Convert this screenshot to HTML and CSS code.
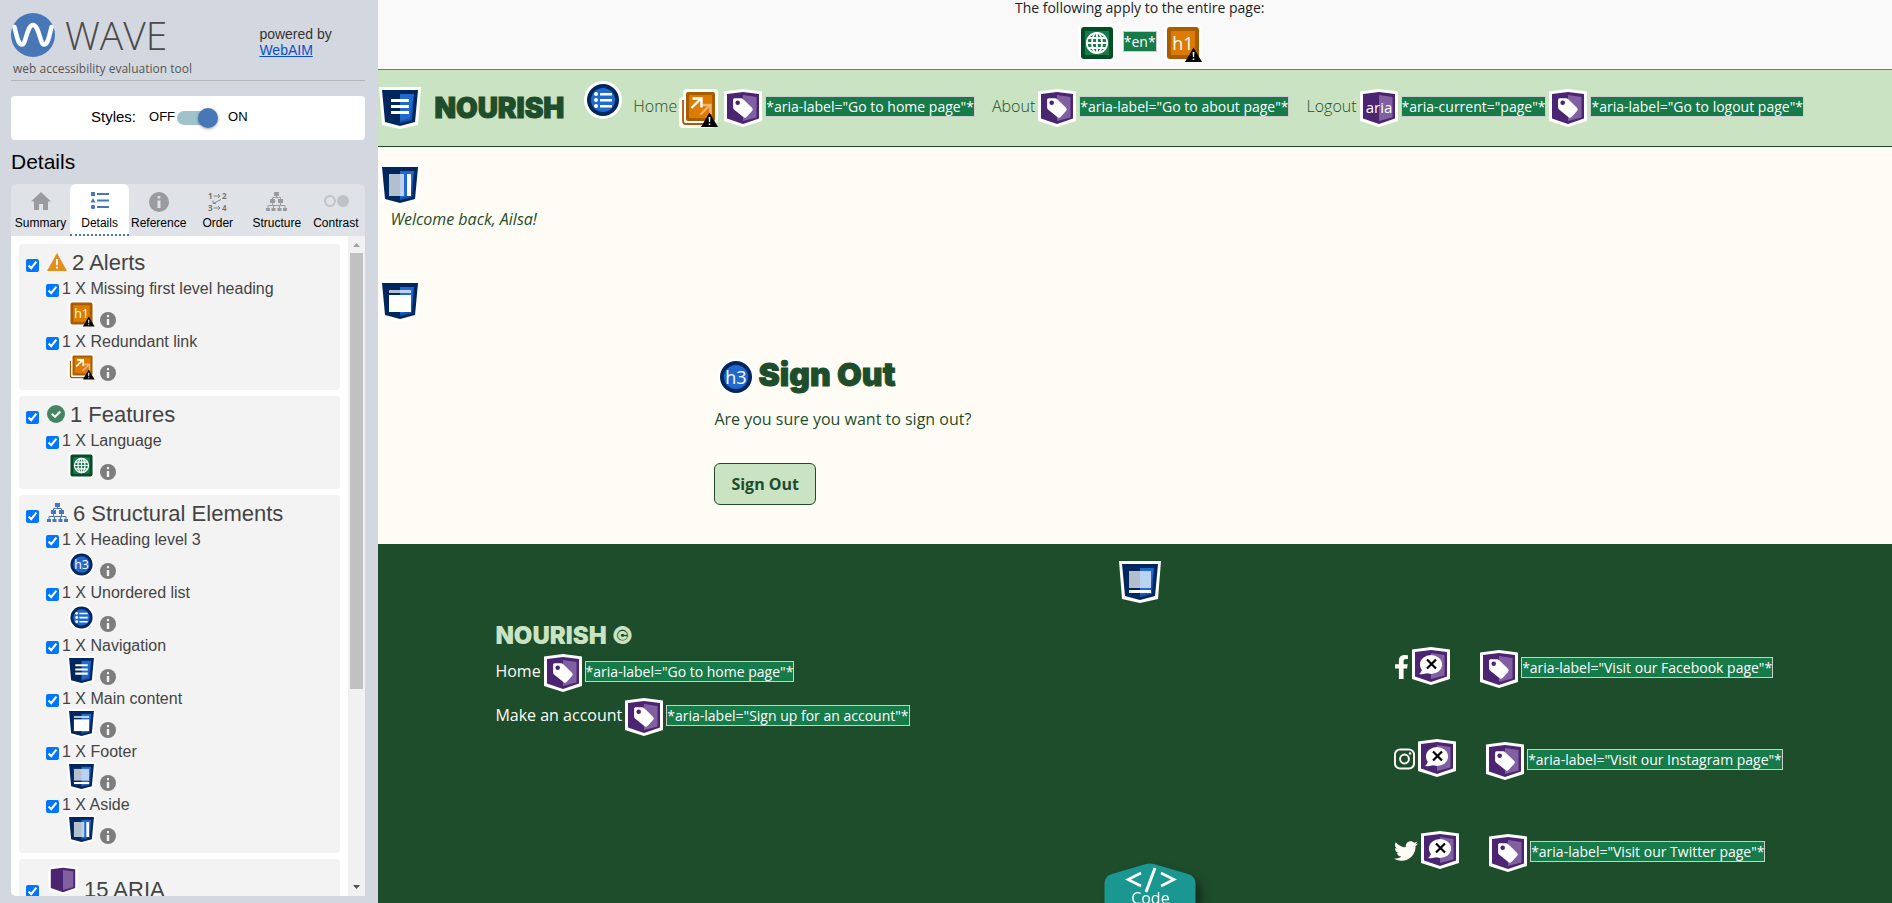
FILE: index.html
```html
<!DOCTYPE html>
<html lang="en">
<head>
<meta charset="utf-8">
<title>Nourish - WAVE report</title>
<link rel="stylesheet" href="styles.css">
</head>
<body>
<svg class="sprite" aria-hidden="true">
  <symbol id="landmark" viewBox="0 0 42 42">
    <path fill="#fff" d="M0 0h42l-3 38-18 4-18-4z"/>
    <path fill="#00265e" d="M3 3h36l-3 32-15 4-15-4z"/>
    <path fill="#1f69cf" d="M21 7h14l-2 26-12 3z"/>
    <path fill="#00265e" opacity=".35" d="M35 7l-2 26-12 3v-2l10-3z"/>
  </symbol>
  <symbol id="nav" viewBox="0 0 42 42">
    <use href="#landmark"/>
    <path fill="#fff" d="M12 12h18v3H12zM12 18h18v3H12zM12 24h18v3H12z"/>
  </symbol>
  <symbol id="aside" viewBox="0 0 42 42">
    <use href="#landmark"/>
    <path fill="#fff" opacity=".7" d="M10 10h15v22H10z"/><path fill="#fff" d="M28 10h4v22h-4z"/>
  </symbol>
  <symbol id="maincontent" viewBox="0 0 42 42">
    <use href="#landmark"/>
    <path fill="#fff" opacity=".7" d="M10 10h22v3H10z"/><path fill="#fff" d="M10 15h22v17H10z"/>
  </symbol>
  <symbol id="foot" viewBox="0 0 42 42">
    <use href="#landmark"/>
    <path fill="#fff" opacity=".7" d="M10 10h22v17H10z"/><path fill="#fff" d="M10 29h22v3H10z"/>
  </symbol>
  <symbol id="disc" viewBox="0 0 42 42">
    <circle cx="21" cy="21" r="19" fill="#fff"/><circle cx="21" cy="21" r="16" fill="#00265e"/><circle cx="21" cy="21" r="12" fill="#1f69cf"/>
  </symbol>
  <symbol id="list" viewBox="0 0 42 42">
    <use href="#disc"/>
    <g fill="#fff"><circle cx="14" cy="15" r="2"/><circle cx="14" cy="21" r="2"/><circle cx="14" cy="27" r="2"/>
    <path d="M18 14h12v2.400H18zM18 20h12v2.400H18zM18 26h12v2.400H18z"/></g>
  </symbol>
  <symbol id="h3" viewBox="0 0 42 42">
    <use href="#disc"/><text class="glyph" x="21" y="28" text-anchor="middle">h3</text>
  </symbol>
  <symbol id="warn" viewBox="0 0 42 42">
    <path d="M31.500 25.500L40 40H23z"/><path fill="#fff" d="M30.600 30h1.800l-.3 5h-1.200zM30.700 36.500h1.600V38h-1.600z"/>
  </symbol>
  <symbol id="h1" viewBox="0 0 42 42">
    <rect x="2" y="2" width="38" height="38" rx="5" fill="#fff"/><rect x="5" y="5" width="32" height="32" rx="3" fill="#aa5d00"/><path fill="#dd7a00" d="M9 9h24v24H9z"/>
    <text class="glyph" x="21" y="28" text-anchor="middle">h1</text><use href="#warn"/>
  </symbol>
  <symbol id="redundant" viewBox="0 0 42 42">
    <rect x="1" y="10" width="36" height="31" rx="4" fill="#fff"/><rect x="5" y="2" width="35" height="35" rx="4" fill="#fff"/>
    <path fill="none" stroke="#aa5d00" stroke-width="1.800" d="M5 13v21q0 3 3 3h24"/>
    <rect x="8" y="5" width="29" height="29" rx="2" fill="#aa5d00"/><path fill="#dd7a00" d="M11 8h23v23H11z"/>
    <path fill="none" stroke="#fff" stroke-width="2.400" d="M13.500 21L23 11.500M14.500 11.500h9v9"/>
    <path fill="none" stroke="#fff" stroke-width="2.400" opacity=".45" d="M22.500 27.500l9-9M24 18h8.500v9"/>
    <use href="#warn"/>
  </symbol>
  <symbol id="globe" viewBox="0 0 42 42">
    <rect x="2" y="2" width="38" height="38" rx="5" fill="#fff"/><rect x="5" y="5" width="32" height="32" rx="3" fill="#004d26"/><path fill="#177a49" d="M9 9h24v24H9z"/>
    <g fill="none" stroke="#fff" stroke-width="1.800"><circle cx="21" cy="21" r="10.200"/><ellipse cx="21" cy="21" rx="5" ry="10.200"/><path d="M21 11v20M11 21h20M12.500 16h17M12.500 26h17"/></g>
  </symbol>
  <symbol id="hex" viewBox="0 0 42 42">
    <path fill="#fff" d="M2 4.500L21 2l19 2.500V34l-19 6-19-6z"/>
    <path fill="#4b2472" d="M5 7l16-2 16 2v24.500L21 37 5 31.500z"/>
    <path fill="#8060a0" d="M21 8l13.500 2v20.500L21 34z"/>
  </symbol>
  <symbol id="tag" viewBox="0 0 42 42">
    <use href="#hex"/>
    <path fill="#fff" d="M12.500 11.300H19q1.300 0 2.200.9l8.800 8.600q1.700 1.600 0 3.300l-5.400 6q-1.600 1.600-3.300 0L12 22.500q-.9-.9-.9-2v-7.700q0-1.500 1.400-1.500z"/>
    <circle cx="15.700" cy="15.700" r="2.300" fill="#4b2472"/>
  </symbol>
  <symbol id="alt" viewBox="0 0 42 42">
    <use href="#hex"/>
    <ellipse cx="21" cy="19.500" rx="11" ry="9.500" fill="#fff"/><path fill="#fff" d="M12 23q0 4-3 6 5 .5 9-1z"/>
    <path stroke="#000" stroke-width="2.200" d="M17 14.500l9 9M26 14.500l-9 9"/>
  </symbol>
  <symbol id="aria" viewBox="0 0 42 42">
    <use href="#hex"/><text class="glyph glyph-aria" x="21" y="26" text-anchor="middle">aria</text>
  </symbol>
  <symbol id="info" viewBox="0 0 16 16">
    <circle cx="8" cy="8" r="8"/><path fill="#f3f3f3" d="M7 3h2v2.300H7zM6.800 7h2.400v6H6.800z"/>
  </symbol>
  <symbol id="tree" viewBox="0 0 21 19">
    <path d="M8 0h5v4H8zM4 7h5v4H4zM12 7h5v4h-5zM0 16h4v3H0zM5.500 16h4v3h-4zM11.500 16h4v3h-4zM17 16h4v3h-4z"/>
    <path fill="none" stroke="currentColor" d="M10.500 4v1.500M6.500 8V5.500h8V8M6.500 11v2.500M14.500 11v2.500M2 16v-2.500h17V16M7.500 13.500V16M13.500 13.500V16"/>
  </symbol>
</svg>

<div class="app">
  <aside class="sidebar">
    <header class="brand">
      <div>
        <div class="wordmark">
          <svg width="44" height="44" viewBox="0 0 44 44" aria-hidden="true">
            <circle cx="22" cy="22" r="22" fill="#4877b8"/>
            <path fill="none" stroke="#fff" stroke-width="4.500" stroke-linecap="round" d="M3.500 14C6 24 7 31.500 11 31.500S16 12 22 12s7 19.500 11 19.500S38 24 40.500 14"/>
          </svg>
          <span>WAVE</span>
        </div>
        <p class="tagline">web accessibility evaluation tool</p>
      </div>
      <p class="powered">powered by<br><a href="#">WebAIM</a></p>
    </header>

    <div class="styles-box">
      <span class="styles-label" id="styles-label">Styles:</span>
      <label class="toggle"><span>OFF</span><input type="checkbox" role="switch" aria-labelledby="styles-label" checked><span>ON</span></label>
    </div>

    <h2 class="side-title">Details</h2>

    <div class="tabs">
      <button class="tab"><svg width="20" height="18" viewBox="0 0 20 18"><path d="M10 0l10 9.500h-3V18h-5v-6H8v6H3V9.500H0z"/></svg>Summary</button>
      <button class="tab active"><svg width="20" height="18" viewBox="0 0 20 18"><path d="M1 0h4v4H1zM7 1h12v2H7zM3 6l2.500 4.500h-5zM7 7.500h12v2H7zM7 14h12v2H7z"/><circle cx="3" cy="15" r="2.200"/></svg>Details</button>
      <button class="tab"><svg width="20" height="20" viewBox="0 0 20 20"><circle cx="10" cy="10" r="10"/><path fill="#dfe2e7" d="M8.700 4h2.600v2.600H8.700zM8.500 8.500h3V16h-3z"/></svg>Reference</button>
      <button class="tab"><svg class="order" width="20" height="20" viewBox="0 0 20 20"><text x="0" y="7">1</text><text x="14" y="7">2</text><text x="0" y="19">3</text><text x="14" y="19">4</text><path d="M5.500 4H12M10 2l2 2-2 2M5.500 16H12M10 14l2 2-2 2M13 7.500l-8 4M5 8.500v3h3"/></svg>Order</button>
      <button class="tab"><svg width="21" height="19"><use href="#tree"/></svg>Structure</button>
      <button class="tab"><svg width="26" height="18" viewBox="0 0 26 18"><circle cx="7" cy="9" r="5" fill="none" stroke="#bfc2c6" stroke-width="2"/><circle cx="20" cy="9" r="6" fill="#bfc2c6"/></svg>Contrast</button>
    </div>

    <div class="panel">
      <div class="cards">
        <section class="card">
          <h3 class="group"><input type="checkbox" aria-label="Alerts" checked><svg width="20" height="18" viewBox="0 0 20 18"><path fill="#e48f1b" d="M10 0l10 18H0z"/><path fill="#f3f3f3" d="M9 6h2v6H9zM9 13.500h2v2H9z"/></svg>2 Alerts</h3>
          <div class="item"><label><input type="checkbox" checked>1 X Missing first level heading</label><div class="item-icons"><svg class="small"><use href="#h1"/></svg><svg class="info"><use href="#info"/></svg></div></div>
          <div class="item"><label><input type="checkbox" checked>1 X Redundant link</label><div class="item-icons"><svg class="small"><use href="#redundant"/></svg><svg class="info"><use href="#info"/></svg></div></div>
        </section>
        <section class="card">
          <h3 class="group"><input type="checkbox" aria-label="Features" checked><svg width="18" height="18" viewBox="0 0 18 18"><circle cx="9" cy="9" r="9" fill="#458563"/><path fill="none" stroke="#f3f3f3" stroke-width="2.200" d="M4.800 8.800l3.200 3 5.300-5.300"/></svg>1 Features</h3>
          <div class="item"><label><input type="checkbox" checked>1 X Language</label><div class="item-icons"><svg class="small"><use href="#globe"/></svg><svg class="info"><use href="#info"/></svg></div></div>
        </section>
        <section class="card">
          <h3 class="group"><input type="checkbox" aria-label="Structural Elements" checked><svg class="blue" width="21" height="19"><use href="#tree"/></svg>6 Structural Elements</h3>
          <div class="item"><label><input type="checkbox" checked>1 X Heading level 3</label><div class="item-icons"><svg class="small"><use href="#h3"/></svg><svg class="info"><use href="#info"/></svg></div></div>
          <div class="item"><label><input type="checkbox" checked>1 X Unordered list</label><div class="item-icons"><svg class="small"><use href="#list"/></svg><svg class="info"><use href="#info"/></svg></div></div>
          <div class="item"><label><input type="checkbox" checked>1 X Navigation</label><div class="item-icons"><svg class="small"><use href="#nav"/></svg><svg class="info"><use href="#info"/></svg></div></div>
          <div class="item"><label><input type="checkbox" checked>1 X Main content</label><div class="item-icons"><svg class="small"><use href="#maincontent"/></svg><svg class="info"><use href="#info"/></svg></div></div>
          <div class="item"><label><input type="checkbox" checked>1 X Footer</label><div class="item-icons"><svg class="small"><use href="#foot"/></svg><svg class="info"><use href="#info"/></svg></div></div>
          <div class="item"><label><input type="checkbox" checked>1 X Aside</label><div class="item-icons"><svg class="small"><use href="#aside"/></svg><svg class="info"><use href="#info"/></svg></div></div>
        </section>
        <section class="card">
          <h3 class="group tall"><input type="checkbox" aria-label="ARIA" checked><svg width="32" height="32"><use href="#hex"/></svg>15 ARIA</h3>
        </section>
      </div>
      <div class="scroll" aria-hidden="true">
        <svg width="17" height="17" viewBox="0 0 17 17"><path fill="#a3a3a3" d="M5 11l3.500-4 3.500 4z"/></svg>
        <div class="thumb"></div>
        <svg width="17" height="17" viewBox="0 0 17 17"><path fill="#505050" d="M5 6h7l-3.500 4z"/></svg>
      </div>
    </div>
  </aside>

  <div class="page">
    <div class="notice">
      <p>The following apply to the entire page:</p>
      <div class="notice-row"><svg class="mark"><use href="#globe"/></svg><span class="note">*en*</span><svg class="mark"><use href="#h1"/></svg></div>
    </div>

    <nav class="topnav">
      <svg class="mark"><use href="#nav"/></svg>
      <a class="logo" href="#">NOURISH</a>
      <svg class="mark list-mark"><use href="#list"/></svg>
      <ul class="menu">
        <li><a href="#">Home</a><svg class="mark"><use href="#redundant"/></svg><svg class="mark"><use href="#tag"/></svg><span class="note">*aria-label="Go to home page"*</span></li>
        <li><a href="#">About</a><svg class="mark"><use href="#tag"/></svg><span class="note">*aria-label="Go to about page"*</span></li>
        <li><a href="#">Logout</a><svg class="mark"><use href="#aria"/></svg><span class="note">*aria-current="page"*</span><svg class="mark"><use href="#tag"/></svg><span class="note">*aria-label="Go to logout page"*</span></li>
      </ul>
    </nav>

    <div class="welcome">
      <svg class="mark"><use href="#aside"/></svg>
      <p>Welcome back, Ailsa!</p>
    </div>

    <main class="content">
      <svg class="mark"><use href="#maincontent"/></svg>
      <form class="signout">
        <h3><svg class="mark"><use href="#h3"/></svg><span>Sign Out</span></h3>
        <p>Are you sure you want to sign out?</p>
        <button type="button">Sign Out</button>
      </form>
    </main>

    <footer class="footer">
      <div class="footer-mark"><svg class="mark"><use href="#foot"/></svg></div>
      <div class="footer-grid">
        <div class="links">
          <h4>NOURISH ©</h4>
          <div class="row"><a href="#">Home</a><svg class="mark"><use href="#tag"/></svg><span class="note">*aria-label="Go to home page"*</span></div>
          <div class="row"><a href="#">Make an account</a><svg class="mark"><use href="#tag"/></svg><span class="note">*aria-label="Sign up for an account"*</span></div>
        </div>
        <div class="social">
          <div class="row"><a href="#" aria-label="Visit our Facebook page"><svg width="15" height="24" viewBox="0 0 320 512"><path d="M279.140 288l14.220-92.660h-88.910v-60.130c0-25.350 12.420-50.060 52.240-50.060h40.420V6.260S260.430 0 225.360 0c-73.220 0-121.080 44.380-121.080 124.720v70.620H22.890V288h81.390v224h100.170V288z"/></svg></a><svg class="mark alt"><use href="#alt"/></svg><svg class="mark"><use href="#tag"/></svg><span class="note">*aria-label="Visit our Facebook page"*</span></div>
          <div class="row"><a href="#" aria-label="Visit our Instagram page"><svg width="21" height="24" viewBox="0 0 448 512"><rect x="20" y="52" width="408" height="408" rx="110" fill="none" stroke="currentColor" stroke-width="42"/><circle cx="224" cy="256" r="94" fill="none" stroke="currentColor" stroke-width="42"/><circle cx="343" cy="137" r="27"/></svg></a><svg class="mark alt"><use href="#alt"/></svg><svg class="mark"><use href="#tag"/></svg><span class="note">*aria-label="Visit our Instagram page"*</span></div>
          <div class="row"><a href="#" aria-label="Visit our Twitter page"><svg width="24" height="24" viewBox="0 0 512 512"><path d="M459.370 151.716c.325 4.548.325 9.097.325 13.645 0 138.720-105.583 298.558-298.558 298.558-59.452 0-114.680-17.219-161.137-47.106 8.447.974 16.568 1.299 25.340 1.299 49.055 0 94.213-16.568 130.274-44.832-46.132-.975-84.792-31.188-98.112-72.772 6.498.974 12.995 1.624 19.818 1.624 9.421 0 18.843-1.300 27.614-3.573-48.081-9.747-84.143-51.980-84.143-102.985v-1.299c13.969 7.797 30.214 12.670 47.431 13.319-28.264-18.843-46.781-51.005-46.781-87.391 0-19.492 5.197-37.360 14.294-52.954 51.655 63.675 129.300 105.258 216.365 109.807-1.624-7.797-2.599-15.918-2.599-24.040 0-57.828 46.782-104.934 104.934-104.934 30.213 0 57.502 12.670 76.670 33.137 23.715-4.548 46.456-13.320 66.599-25.340-7.798 24.366-24.366 44.833-46.132 57.827 21.117-2.273 41.584-8.122 60.426-16.243-14.292 20.791-32.161 39.308-52.628 54.253z"/></svg></a><svg class="mark alt"><use href="#alt"/></svg><svg class="mark"><use href="#tag"/></svg><span class="note">*aria-label="Visit our Twitter page"*</span></div>
        </div>
      </div>
    </footer>

    <button class="code" aria-label="Code">
      <svg width="92" height="40" viewBox="0 0 92 40" aria-hidden="true">
        <path fill="#1a9790" d="M42 1q4-1 8 0l34 10q7 2 7.500 9v30H.5V20Q1 13 8 11z"/>
        <path fill="none" stroke="#fff" stroke-width="2.600" d="M37 10L24 16.500 37 23M57 10l13 6.500L57 23"/><path stroke="#fff" stroke-width="3" d="M51 5l-9 24"/>
      </svg>
      <span>Code</span>
    </button>
  </div>
</div>
</body>
</html>
```
FILE: styles.css
```css
* { box-sizing: border-box; }
body { margin: 0; font-family: "Open Sans", sans-serif; font-size: 16px; color: #1e4d2b; overflow: hidden; }
p, h2, h3, h4, ul { margin: 0; padding: 0; font-weight: 400; }
svg { display: block; flex: none; }
button { font: inherit; cursor: pointer; }
.sprite { display: none; }
.glyph { font: 18px "Open Sans", sans-serif; fill: #fff; }
.glyph-aria { font-size: 15px; }
.app { display: flex; height: 100vh; }

/* Sidebar */
.sidebar { width: 20%; flex: none; display: flex; flex-direction: column; padding: 13px 13px 7px 11px; background: #d3d8e0; font-family: "Liberation Sans", Arial, sans-serif; color: #000; }
.brand { display: flex; justify-content: space-between; border-bottom: 1px solid #b3b5b8; height: 68px; }
.wordmark { display: flex; align-items: center; gap: 10px; height: 44px; font: 300 39px/46px "Open Sans", sans-serif; color: #4a4a4a; }
.tagline { padding-left: 2px; font: 12px/16px "Open Sans", sans-serif; margin-top: 4px; color: #555; }
.powered { width: 106px; padding-top: 13px; font-size: 14px; line-height: 16px; color: #333; }
.powered a { color: #0b50c8; }
.styles-box { display: flex; align-items: center; margin-top: 15px; padding: 0 0 3px 80px; gap: 13px; height: 44px; border-radius: 4px; background: #fff; font-size: 15px; }
.toggle { display: flex; align-items: center; gap: 2px; font-size: 13px; }
.toggle span:last-child { padding-left: 8px; }
.toggle input { appearance: none; display: flex; justify-content: flex-end; align-items: center; width: 41px; height: 14px; margin: 3px 0 0; border-radius: 7px; background: linear-gradient(90deg, #9fc2cc 30px, transparent 30px); }
.toggle input::before { content: ""; width: 20px; height: 20px; border-radius: 50%; background: #4877b8; box-shadow: 0 1px 3px rgba(0,0,0,.4); }
.side-title { margin: 9px 0 10px; font-size: 21px; line-height: 25px; }
.tabs { display: grid; grid-template-columns: repeat(6, 1fr); height: 52px; border-radius: 6px 6px 0 0; background: #dfe2e7; }
.tab { display: flex; flex-direction: column; align-items: center; justify-content: space-between; min-width: 0; padding: 8px 0 4px; border: 0; border-bottom: 2px dotted transparent; background: none; font-size: 12px; line-height: 14px; color: #000; }
.tab svg { fill: #999b9e; color: #999b9e; }
.tab .order { font: bold 8px "Open Sans", sans-serif; fill: #777; overflow: visible; }
.tab .order path { fill: none; stroke: #888; }
.tab.active { border-radius: 6px 6px 0 0; border-bottom-color: #4877b8; background: #fff; }
.tab.active svg { fill: #4877b8; }
.panel { display: flex; flex: 1; min-height: 0; overflow: hidden; border-radius: 0 0 0 5px; background: #fff; }
.cards { flex: 1; display: flex; flex-direction: column; gap: 6px; padding: 8px; color: #444; }
.card { flex: none; padding-bottom: 5px; border-radius: 4px; background: #f3f3f3; }
.card input { width: 13px; height: 13px; margin: 0; flex: none; }
.group { display: flex; align-items: center; height: 35px; padding: 3px 0 0 7px; font-size: 22px; line-height: 24px; }
.group input { margin-top: 4px; }
.group svg { margin: 0 5px 3px 8px; }
.blue { fill: #4877b8; color: #4877b8; }
.group.tall { height: 48px; padding-top: 13px; }
.group.tall svg { align-self: flex-start; margin-top: -8px; }
.item { height: 53px; padding-left: 27px; font-size: 16px; line-height: 19px; }
.item label { display: flex; align-items: flex-end; gap: 3px; }
.item input { margin-bottom: 1px; }
.item-icons { display: flex; align-items: flex-end; gap: 4px; padding: 1px 0 0 21px; }
.small { width: 29px; height: 29px; }
.info { width: 16px; height: 16px; fill: #7d7d7d; }
.scroll { display: flex; flex-direction: column; width: 17px; background: #f1f1f1; }
.thumb { width: 13px; height: 66%; margin: 0 auto auto; background: #c1c1c1; }

/* Evaluated page */
.page { position: relative; flex: 1; min-width: 0; display: flex; flex-direction: column; background: #fffcf5; }
.page > * { flex: none; }
.mark { width: 42px; height: 42px; margin: 0 1px; overflow: visible; }
.note { margin-bottom: 3px; border: 1px solid #ccc; background: #177a49; color: #fff; font-size: 14px; line-height: 19px; white-space: nowrap; }
.notice { padding: 0 0 5px 9px; border-bottom: 1px solid #6c7c6e; background: #f9f9f9; text-align: center; font-size: 14px; line-height: 16px; color: #222; }
.notice-row { display: flex; justify-content: center; align-items: center; gap: 4px; margin-top: 6px; }
.topnav { display: flex; align-items: center; height: 77px; border-bottom: 1px solid #1e4d2b; background: #cae3c2; }
.logo, .signout h3, .links h4 { font-family: Inter, sans-serif; font-weight: 900; }
.logo, .signout h3 { -webkit-text-stroke: 1px currentColor; }
.logo { margin: 0 17px 0 12px; font-size: 28px; line-height: 32px; color: #1e4d2b; text-decoration: none; }
.list-mark { margin-bottom: 16px; }
.menu { display: flex; gap: 17px; margin-left: 8px; list-style: none; }
.menu li, .row { display: flex; align-items: center; }
.menu a, .row a { margin-bottom: 4px; }
.menu a { font-weight: 300; color: #1e4d2b; text-decoration: none; }
.welcome { padding-top: 17px; }
.welcome p { padding: 1px 12px; font-style: italic; line-height: 24px; }
.content { padding: 48px 0 39px; }
.signout { display: flex; flex-direction: column; align-items: flex-start; margin: 34px 0 0 336px; }
.signout h3 { display: flex; align-items: center; font-size: 32px; line-height: 36px; }
.signout h3 span { margin-bottom: 4px; }
.signout p { margin: 9px 0 32px; line-height: 24px; }
.signout button { padding: 0 16px; border: 1px solid #1e4d2b; border-radius: 6px; background: #cae3c2; color: #1e4d2b; font-weight: 700; line-height: 40px; }
.page .footer { flex: 1; min-height: 0; overflow: hidden; padding-top: 17px; background: #1e4d2b; color: #fff; }
.footer a { color: #fffcf5; text-decoration: none; }
.footer a svg { fill: currentColor; }
.footer-mark { display: flex; justify-content: center; padding-left: 9px; }
.footer-grid { display: grid; grid-template-columns: 899fr 498fr; padding: 18px 0 0 117px; }
.links h4 { font-size: 24px; line-height: 30px; color: #cae3c2; }
.links .row { height: 44px; }
.social { padding-top: 27px; }
.social .row { height: 42px; margin-bottom: 50px; }
.social .alt { margin: 0 25px 6px 1px; }
.code { position: absolute; left: 726px; bottom: 0; height: 40px; padding: 0; border: 0; background: none; color: #fff; filter: drop-shadow(6px 6px 5px rgba(0,0,0,.4)); }
.code span { position: absolute; left: 0; right: 0; top: 24px; line-height: 22px; }
```
